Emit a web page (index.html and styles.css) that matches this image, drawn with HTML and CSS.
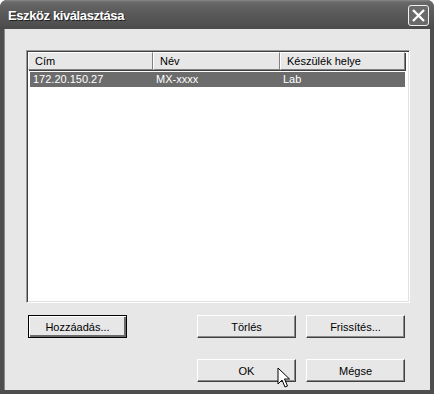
FILE: index.html
```html
<!DOCTYPE html>
<html>
<head>
<meta charset="utf-8">
<link rel="stylesheet" href="styles.css">
</head>
<body>
<div class="window">
  <div class="titlebar">
    <span class="title">Eszköz kiválasztása</span>
    <span class="close"><svg width="15" height="15" viewBox="0 0 15 15"><path d="M2 2 L13 13 M13 2 L2 13" stroke="#fff" stroke-width="2.4" fill="none"/></svg></span>
  </div>
  <div class="client">
    <div class="list">
      <div class="header">
        <div class="hcell c1">Cím</div>
        <div class="hcell c2">Név</div>
        <div class="hcell c3">Készülék helye</div>
      </div>
      <div class="row selected">
        <div class="cell c1">172.20.150.27</div>
        <div class="cell c2">MX-xxxx</div>
        <div class="cell c3">Lab</div>
      </div>
    </div>
    <div class="btnrow first">
      <button class="btn default">Hozzáadás...</button>
      <div class="spacer"></div>
      <button class="btn">Törlés</button>
      <button class="btn">Frissítés...</button>
    </div>
    <div class="btnrow second">
      <div class="spacer"></div>
      <button class="btn">OK</button>
      <button class="btn">Mégse</button>
    </div>
  </div>
  <svg class="cursor" width="14" height="23" viewBox="0 0 14 23"><path d="M1 1 L1 17 L5 13 L8 20 L10.5 19 L7.5 12 L12.5 12 Z" fill="#fff" stroke="#000" stroke-width="1"/></svg>
</div>
</body>
</html>
```
FILE: styles.css
```css
html, body { margin: 0; padding: 0; background: #fff; }
body { width: 434px; height: 394px; overflow: hidden; }
.window {
  position: relative;
  width: 434px; height: 394px;
  box-sizing: border-box;
  background: #4e4e4e;
  border-radius: 7px 7px 0 0;
  display: flex; flex-direction: column;
  padding: 0 4px 4px 4px;
  font-family: "Liberation Sans", Arial, sans-serif;
}
.titlebar {
  height: 29px;
  margin: 0 -4px;
  padding: 0 5px 0 8px;
  border-radius: 7px 7px 0 0;
  background: linear-gradient(#8a8a8a 0, #6a6a6a 2px, #626262 6px, #595959 14px, #505050 24px, #4a4a4a 29px);
  display: flex; align-items: center; justify-content: space-between;
}
.title {
  color: #fff; font-weight: bold; font-size: 13px;
  font-family: "Liberation Sans", Arial, sans-serif;
  letter-spacing: -0.4px;
  text-shadow: 1px 1px 0 #222;
  margin-top: 1px;
}
.close {
  width: 19px; height: 19px;
  border: 1px solid #f0f0f0; border-radius: 3px;
  background: #6a6a6a;
  display: flex; align-items: center; justify-content: center;
  margin-top: 2px;
}
.client {
  flex: 1;
  background: #e7e7e7;
  border-left: 1px solid #8a8a8a;
  display: flex; flex-direction: column;
  padding: 21px 0 0 21px;
}
.list {
  width: 384px; height: 253px; box-sizing: border-box;
  background: #fff;
  border-top: 1px solid #9a9a9a; border-left: 1px solid #9a9a9a;
  border-right: 1px solid #fff; border-bottom: 1px solid #fff;
  box-shadow: inset 1px 1px 0 #404040, inset -1px -1px 0 #e0e0e0;
  padding: 1px 3px 0 1px;
  font-size: 11px;
}
.header { display: flex; height: 18px; }
.hcell {
  box-sizing: border-box; height: 18px;
  background: #e7e7e7;
  border-top: 1px solid #fff; border-left: 1px solid #fff;
  border-right: 1px solid #808080; border-bottom: 1px solid #808080;
  box-shadow: 1px 1px 0 #404040;
  padding: 2px 0 0 6px;
  color: #000;
}
.c1 { width: 125px; }
.c2 { width: 127px; }
.c3 { width: 125px; }
.row { display: flex; height: 15px; margin: 2px 0 0 2px; width: 375px; }
.row .c1 { width: 123px; }
.selected { background: #6c6c6c; color: #fff; }
.cell { box-sizing: border-box; padding: 1px 0 0 3px; }
.btnrow { display: flex; gap: 10px; padding-left: 2px; width: 377px; }
.btnrow.first { margin-top: 12px; }
.btnrow.second { margin-top: 21px; }
.spacer { flex: 1; }
.btn {
  width: 99px; height: 23px; box-sizing: border-box;
  background: #e7e7e7;
  border-top: 1px solid #fff; border-left: 1px solid #fff;
  border-right: 1px solid #404040; border-bottom: 1px solid #404040;
  box-shadow: inset -1px -1px 0 #8a8a8a;
  font-family: "Liberation Sans", Arial, sans-serif;
  font-size: 11px; color: #000; padding: 0;
}
.btn.default {
  border: 1px solid #000;
  box-shadow: inset 1px 1px 0 #fff, inset -2px -2px 0 #6a6a6a;
}
.cursor { position: absolute; left: 277px; top: 367px; }
```
